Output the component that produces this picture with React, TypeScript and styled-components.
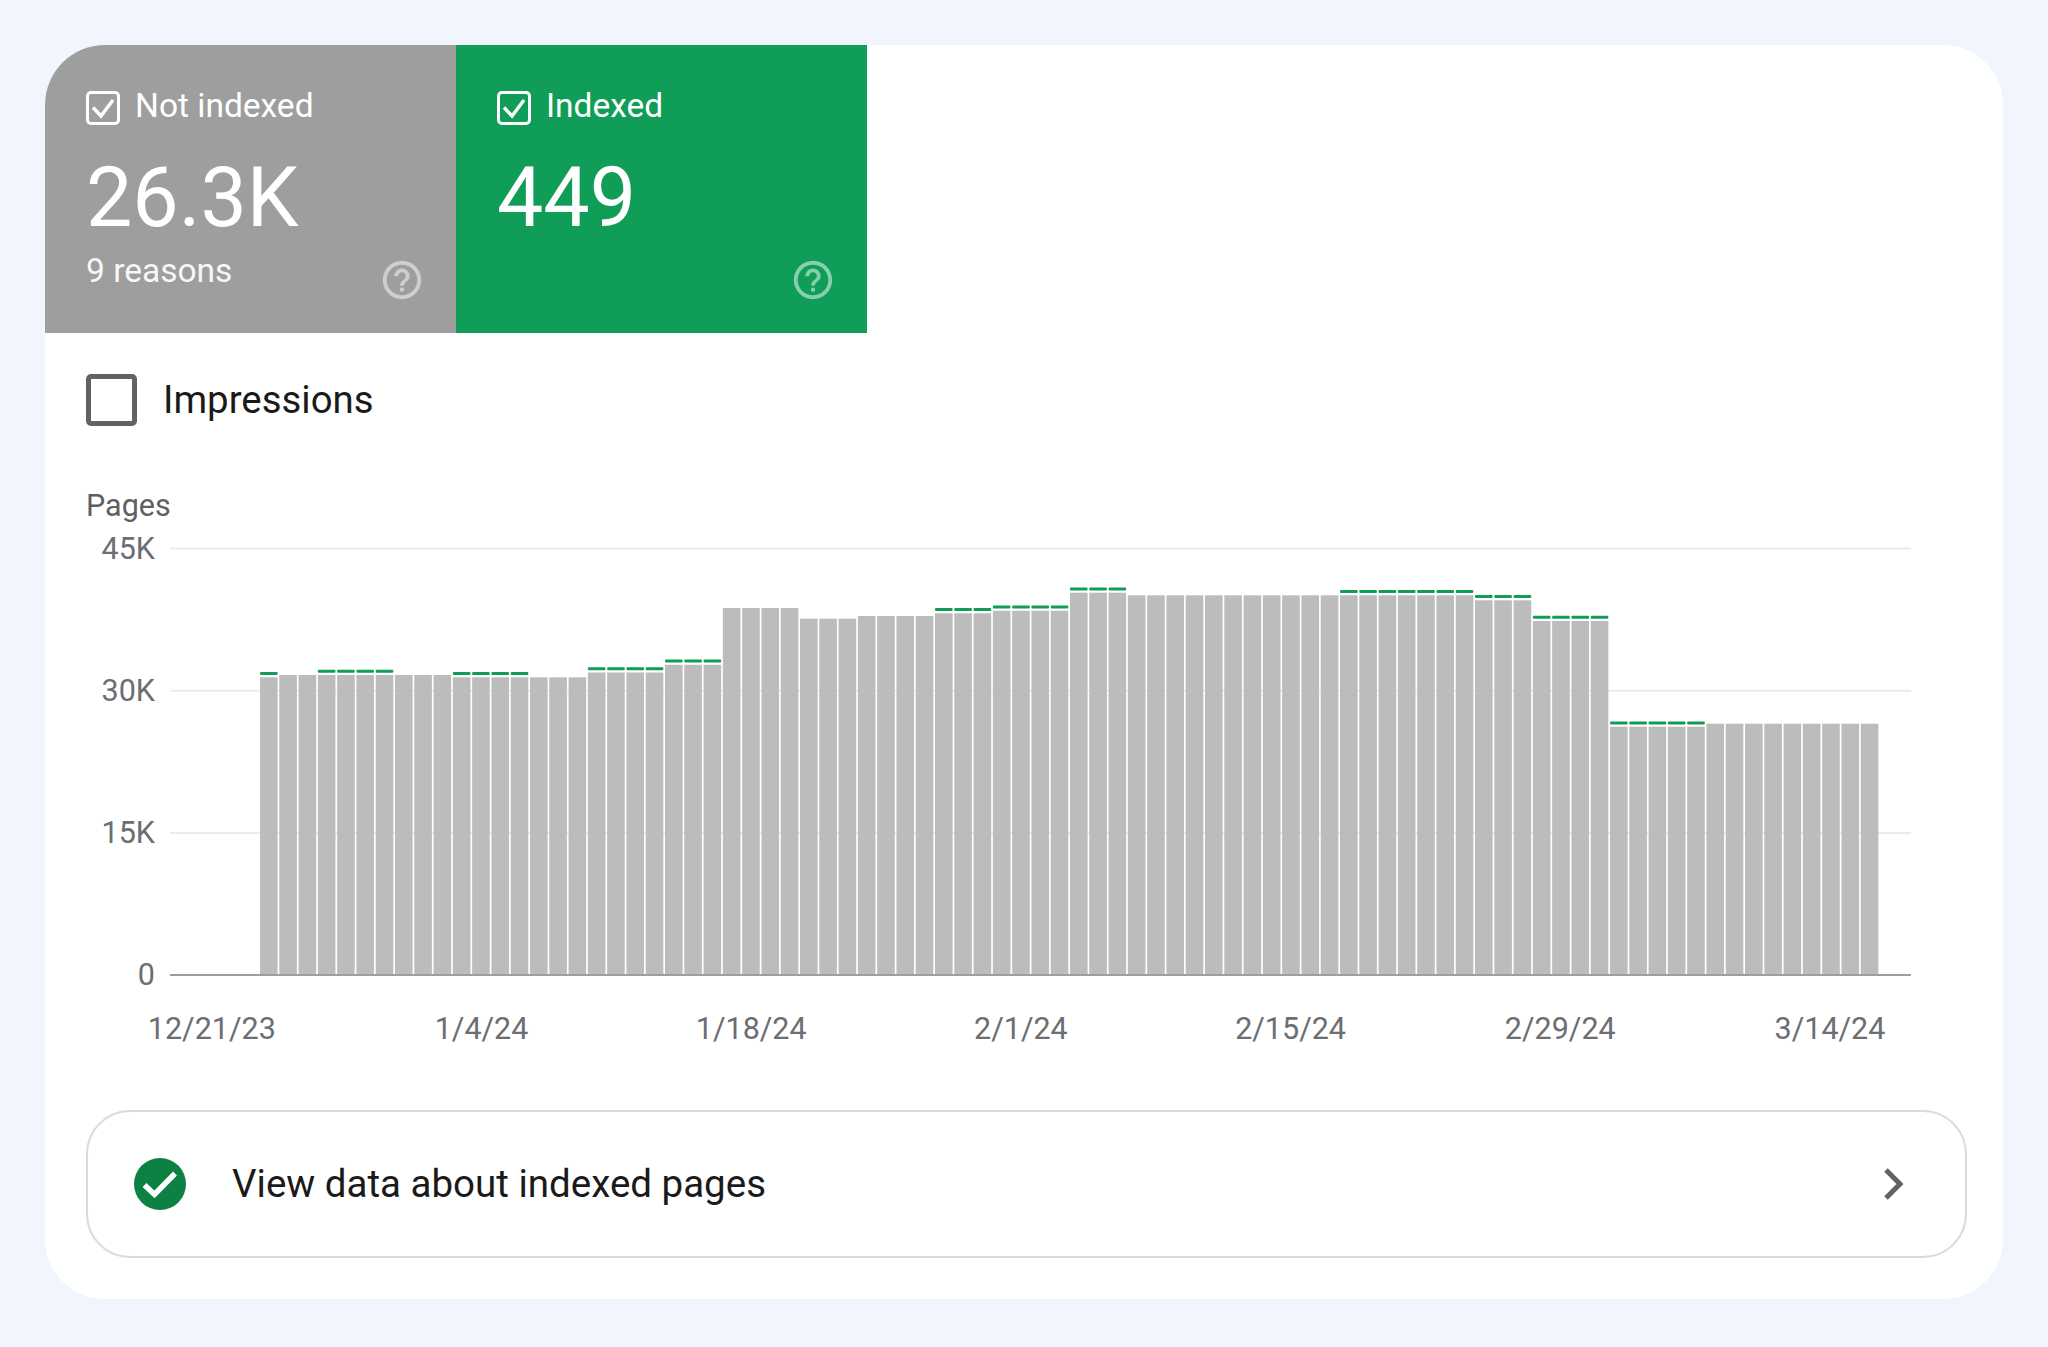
import React from "react";
import styled, { createGlobalStyle } from "styled-components";

const Global = createGlobalStyle`
  html, body { margin: 0; padding: 0; background: #f0f5fe; }
  body { font-family: Roboto, "Liberation Sans", sans-serif; }
`;

const Page = styled.div`
  width: 2048px;
  height: 1347px;
  box-sizing: border-box;
  padding: 45px;
  background: #f0f5fe;
`;

const Card = styled.main`
  width: 1958px;
  height: 1254px;
  background: #fff;
  border-radius: 60px;
  overflow: hidden;
  display: flex;
  flex-direction: column;
`;

const Tiles = styled.div`
  display: flex;
  height: 288px;
  flex: none;
`;

const Tile = styled.section<{ $bg: string }>`
  position: relative;
  width: 411px;
  box-sizing: border-box;
  padding: 44px 0 0 41px;
  background: ${(p) => p.$bg};
  color: #fff;
`;

const TileHead = styled.div`
  display: flex;
  align-items: center;
  gap: 15px;
  height: 34px;
  font-size: 33.5px;
  line-height: 34px;
`;

const CheckGlyph = styled.svg`
  margin-top: 3px;
  flex: none;
`;

const TileValue = styled.div`
  font-size: 82.5px;
  line-height: 84px;
  margin-top: 33px;
`;

const TileNote = styled.div`
  font-size: 33.5px;
  line-height: 36px;
  margin-top: 13px;
  opacity: 0.92;
`;

const HelpIcon = styled.svg`
  position: absolute;
  right: 31px;
  bottom: 30px;
  width: 46px;
  height: 46px;
  fill: #fff;
  opacity: 0.5;
`;

const Body = styled.div`
  padding: 41px 36px 0 41px;
  display: flex;
  flex-direction: column;
`;

const ImpressionRow = styled.label`
  display: flex;
  align-items: center;
  gap: 26px;
  height: 52px;
  font-size: 38.4px;
  color: #1a1a1a;
`;

const ImpressionText = styled.span`
  margin-top: -2px;
`;

const BigBox = styled.span`
  width: 51px;
  height: 52px;
  box-sizing: border-box;
  border: 5px solid #5f6368;
  border-radius: 5px;
`;

const AxisTitle = styled.div`
  margin-top: 64px;
  font-size: 30.5px;
  line-height: 32px;
  color: #5f5f5f;
`;

const ChartRow = styled.div`
  display: flex;
  margin-top: 12px;
  height: 456px;
`;

const YAxis = styled.div`
  width: 69px;
  height: 454px;
  margin-top: 1px;
  flex: none;
  display: flex;
  flex-direction: column;
  justify-content: space-between;
  align-items: flex-end;
  font-size: 30.5px;
  line-height: 28px;
  color: #6b6e72;
  margin-right: -8px;
`;

const Plot = styled.svg`
  display: block;
  margin: 2px 0 0 23px;
  width: 1741px;
  height: 445px;
`;

const XAxis = styled.div`
  display: flex;
  margin: 22px 0 0 -9px;
  font-size: 30.5px;
  line-height: 34px;
  color: #6b6e72;
`;

const XTick = styled.span`
  width: 269.7px;
  flex: none;
  text-align: center;
`;

const LinkRow = styled.a`
  display: flex;
  align-items: center;
  box-sizing: border-box;
  height: 148px;
  width: 1881px;
  margin-top: 64px;
  padding: 0 61px 0 46px;
  border: 2px solid #dadada;
  border-radius: 44px;
  font-size: 38.5px;
  color: #1a1a1a;
`;

const LinkText = styled.span`
  flex: 1;
  margin-left: 46px;
  margin-top: -1px;
`;

const CheckDisc = styled.svg`
  width: 52px;
  height: 52px;
  flex: none;
`;

const Chevron = styled.svg`
  width: 20px;
  height: 32px;
  flex: none;
`;

const BoxIcon = () => (
  <CheckGlyph width="34" height="34" viewBox="0 0 34 34" fill="none" stroke="#fff">
    <rect x="1.5" y="1.5" width="31" height="31" rx="3.5" strokeWidth="3" />
    <path d="M7 16.5l8 8.5L27 9" strokeWidth="3.4" />
  </CheckGlyph>
);

const Help = () => (
  <HelpIcon viewBox="0 0 24 24">
    <path d="M11 18h2v-2h-2v2zm1-16C6.48 2 2 6.48 2 12s4.48 10 10 10 10-4.48 10-10S17.52 2 12 2zm0 18c-4.41 0-8-3.59-8-8s3.59-8 8-8 8 3.59 8 8-3.59 8-8 8zm0-14c-2.21 0-4 1.79-4 4h2c0-1.1.9-2 2-2s2 .9 2 2c0 2-3 1.75-3 5h2c0-2.25 3-2.5 3-5 0-2.21-1.79-4-4-4z" />
  </HelpIcon>
);

// Runs of [count, top of the grey bar, has a green segment], in page pixels.
const runs: [number, number, boolean][] = [
  [1, 677.3, true],
  [2, 675, false],
  [4, 675, true],
  [3, 675, false],
  [4, 677.3, true],
  [3, 677.3, false],
  [4, 672.5, true],
  [3, 664.8, true],
  [4, 608, false],
  [3, 618.7, false],
  [4, 616, false],
  [3, 613.3, true],
  [4, 610.7, true],
  [3, 592.7, true],
  [11, 595.3, false],
  [7, 595.3, true],
  [3, 600.3, true],
  [4, 621, true],
  [5, 726.7, true],
  [9, 723.7, false],
];

const bars = runs.flatMap(([n, top, green]) => Array.from({ length: n }, () => ({ top, green })));

const BASE = 974;

const Chart = () => (
  <Plot viewBox="170 535 1741 445">
    {[547.5, 689.7, 832].map((y) => (
      <line key={y} x1={170} x2={1911} y1={y} y2={y} stroke="#ebebeb" strokeWidth="2" />
    ))}
    {bars.map((b, i) => {
      const x = 260 + i * 19.286;
      const top = b.top - 1;
      return (
        <g key={i}>
          <rect x={x} y={top} width={17.6} height={BASE - top} fill="#bcbcbc" />
          {b.green && <rect x={x} y={top - 5.2} width={17.6} height={3} rx={1} fill="#0f9d58" />}
        </g>
      );
    })}
    <line x1={170} x2={1911} y1={BASE} y2={BASE} stroke="#9e9e9e" strokeWidth="2" />
  </Plot>
);

export default function App() {
  return (
    <Page>
      <Global />
      <Card>
        <Tiles>
          <Tile $bg="#9e9e9e">
            <TileHead>
              <BoxIcon />
              Not indexed
            </TileHead>
            <TileValue>26.3K</TileValue>
            <TileNote>9 reasons</TileNote>
            <Help />
          </Tile>
          <Tile $bg="#0f9d58">
            <TileHead>
              <BoxIcon />
              Indexed
            </TileHead>
            <TileValue>449</TileValue>
            <Help />
          </Tile>
        </Tiles>
        <Body>
          <ImpressionRow>
            <BigBox />
            <ImpressionText>Impressions</ImpressionText>
          </ImpressionRow>
          <AxisTitle>Pages</AxisTitle>
          <ChartRow>
            <YAxis>
              <span>45K</span>
              <span>30K</span>
              <span>15K</span>
              <span>0</span>
            </YAxis>
            <Chart />
          </ChartRow>
          <XAxis>
            {["12/21/23", "1/4/24", "1/18/24", "2/1/24", "2/15/24", "2/29/24", "3/14/24"].map((d) => (
              <XTick key={d}>{d}</XTick>
            ))}
          </XAxis>
          <LinkRow>
            <CheckDisc viewBox="0 0 52 52">
              <circle cx="26" cy="26" r="26" fill="#0d8043" />
              <path d="M10.5 27l10 9.5L41 15.5" fill="none" stroke="#fff" strokeWidth="5.5" />
            </CheckDisc>
            <LinkText>View data about indexed pages</LinkText>
            <Chevron viewBox="0 0 20 32">
              <path d="M2 2l14 14L2 30" fill="none" stroke="#5f6368" strokeWidth="5" />
            </Chevron>
          </LinkRow>
        </Body>
      </Card>
    </Page>
  );
}
